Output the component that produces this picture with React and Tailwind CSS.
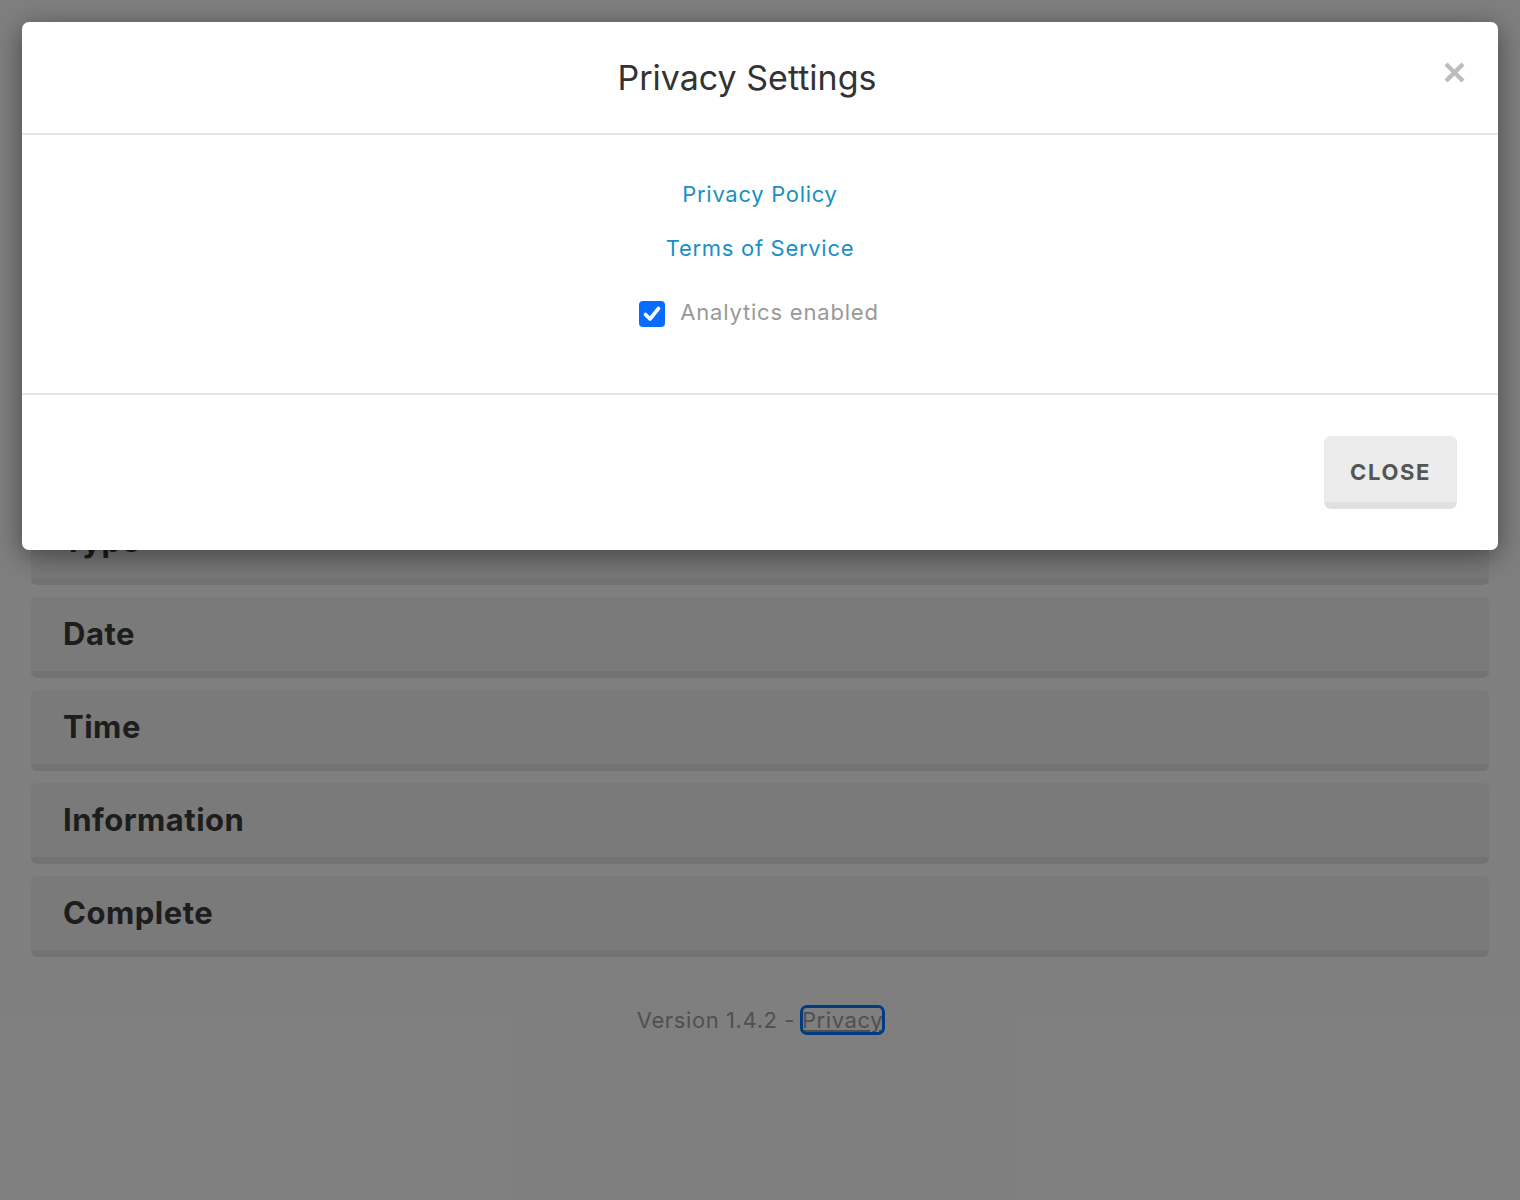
import React from "react";

const cards = ["Welcome", "Location", "Provider", "Service", "Category", "Type", "Date", "Time", "Information", "Complete"];

export default function App() {
  return (
    <div className="relative min-h-[1200px] w-full bg-white">
      <div className="font-['Inter',sans-serif] px-[31px] pt-[39px]">
        <div className="flex flex-col gap-[12px]">
          {cards.map((c) => (
            <div
              key={c}
              className="h-[81px] rounded-[6px] bg-[#f4f4f4] border-b-[7px] border-[#e6e6e6] flex items-center px-[32px] pb-[1px]"
            >
              <span className="text-[31px] font-bold text-[#3a3a3a] leading-none tracking-[0.5px]">{c}</span>
            </div>
          ))}
        </div>
        <div className="mt-[47px] text-center text-[22px] text-[#a0a0a0] tracking-[0.6px]">
          Version 1.4.2 -{" "}
          <a className="underline text-[#a0a0a0] rounded-[5px] outline outline-[3px] outline-[#0078ff] -outline-offset-1">Privacy</a>
        </div>
      </div>

      {/* overlay */}
      <div className="absolute inset-0 bg-black/50" />

      {/* modal */}
      <div className="absolute left-[22px] top-[22px] w-[1476px] rounded-[7px] bg-white shadow-[0_6px_28px_rgba(0,0,0,0.45)] font-['Inter',sans-serif]">
        <div className="relative h-[113px] border-b-2 border-[#e5e5e5] flex items-center justify-center pr-[26px]">
          <h2 className="text-[34px] font-normal text-[#333] tracking-[0px] -mt-[1px]">Privacy Settings</h2>
          <button className="absolute right-[32px] top-[39px]">
            <svg width="23" height="23" viewBox="0 0 23 23">
              <path d="M3 3 L20 20 M20 3 L3 20" stroke="#bdbdbd" strokeWidth="4.4" strokeLinecap="butt" />
            </svg>
          </button>
        </div>
        <div className="h-[260px] border-b-2 border-[#e5e5e5] flex flex-col items-center pt-[44px]">
          <a className="text-[22px] text-[#1a8fc4] leading-[30px] tracking-[0.7px]">Privacy Policy</a>
          <a className="mt-[24px] text-[22px] text-[#1a8fc4] leading-[30px] tracking-[0.7px]">Terms of Service</a>
          <label className="mt-[34px] flex items-center gap-[15px] pr-[2px]">
            <span className="w-[26px] h-[26px] rounded-[4px] bg-[#0a6cff] flex items-center justify-center mt-[4px]">
              <svg width="20" height="20" viewBox="0 0 20 20">
                <path d="M3.5 10.5 L8 15 L16.5 4.5" fill="none" stroke="white" strokeWidth="3.6" strokeLinecap="round" strokeLinejoin="round" />
              </svg>
            </span>
            <span className="text-[22px] text-[#999] leading-[30px] tracking-[0.8px]">Analytics enabled</span>
          </label>
        </div>
        <div className="h-[155px] flex items-start justify-end pt-[41px] pr-[41px]">
          <button className="w-[133px] h-[73px] rounded-[7px] bg-[#ececec] border-b-[7px] border-[#e0e0e0] border-x border-t border-x-[#e6e6e6] border-t-[#ececec] text-[22px] font-bold text-[#555] tracking-[1.6px] pt-[6px]">
            CLOSE
          </button>
        </div>
      </div>
    </div>
  );
}
